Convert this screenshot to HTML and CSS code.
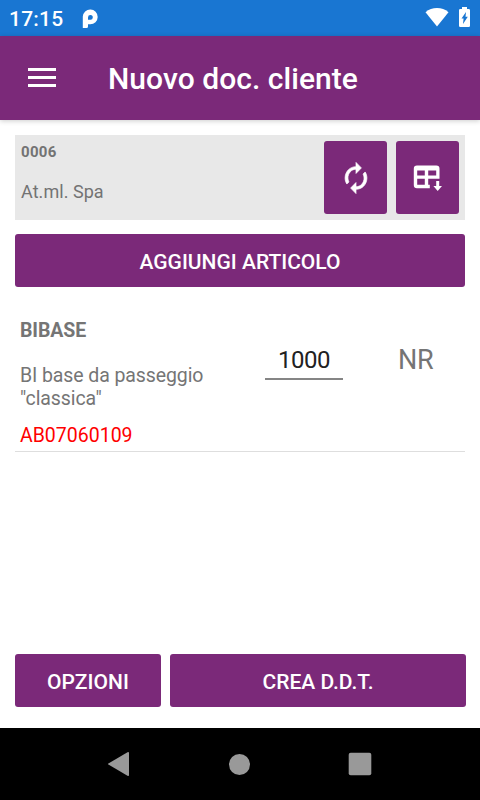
FILE: index.html
```html
<!DOCTYPE html>
<html lang="it">
<head>
<meta charset="utf-8">
<title>Nuovo doc. cliente</title>
<link rel="stylesheet" href="styles.css">
</head>
<body>
<div class="screen">
  <div class="status">
    <span class="clock">17:15</span>
    <svg class="p-logo" width="16" height="20" viewBox="0 0 16 20"><path fill="#fff" fill-rule="evenodd" d="M.800 19V7.500a7.450 7.450 0 1 1 7.500 7.800H6V17.500Q6 19 4.500 19ZM6 10.800H8.200a2.400 2.400 0 1 0-2.200-2.400Z"/></svg>
    <svg class="wifi" width="24" height="19" viewBox="0 0 24 19"><path fill="#fff" d="M12 18.500.500 4.200Q5.500 0 12 0T23.500 4.200Z"/></svg>
    <svg class="battery" width="11" height="20" viewBox="0 0 11 20"><path fill="#fff" fill-rule="evenodd" d="M3 0H8V2H9.700Q11 2 11 3.300V18.700Q11 20 9.700 20H1.300Q0 20 0 18.700V3.300Q0 2 1.300 2H3ZM7 5 2.500 11.500H4.600L4 17 8.800 9.700H6.500Z"/></svg>
  </div>
  <header class="appbar">
    <div class="menu"><i></i><i></i><i></i></div>
    <h1>Nuovo doc. cliente</h1>
  </header>
  <main class="content">
    <section class="customer">
      <div class="customer-info">
        <div class="code">0006</div>
        <div class="name">At.ml. Spa</div>
      </div>
      <button class="btn icon-btn" aria-label="Aggiorna">
        <svg width="34" height="34" viewBox="0 0 24 24"><path fill="#fff" stroke="#fff" stroke-width=".5" d="M12 5.800v3l3.800-3.900L12 1v3c-4.420 0-7.700 3.580-7.700 8 0 1.570.460 3.030 1.240 4.260L7 14.800c-.450-.830-.700-1.790-.700-2.800 0-3.310 2.390-6.200 5.700-6.200zm6.460 1.940L17 9.200c.440.840.700 1.790.700 2.800 0 3.310-2.390 6.200-5.700 6.200v-3l-3.800 3.900L12 23v-3c4.420 0 7.700-3.580 7.700-8 0-1.570-.460-3.030-1.240-4.260z"/></svg>
      </button>
      <button class="btn icon-btn" aria-label="Inserisci">
        <svg width="30" height="28" viewBox="0 0 30 28"><path fill="#fff" fill-rule="evenodd" d="M4 1.500H23.300Q26.500 1.500 26.500 4.700V14.800H15.200V20.800H16.800V24.200H4Q.800 24.200.800 21V4.700Q.800 1.500 4 1.500ZM4.200 6.500V11.500H11.800V6.500ZM15.200 6.500V11.500H23.200V6.500ZM4.200 14.800V20.800H11.800V14.800ZM23.200 17H26.200V22H29L24.700 27 20.400 22H23.200Z"/></svg>
      </button>
    </section>
    <button class="btn add">AGGIUNGI ARTICOLO</button>
    <section class="item">
      <div class="item-info">
        <div class="item-code">BIBASE</div>
        <div class="item-desc">BI base da passeggio<br>"classica"</div>
        <div class="item-lot">AB07060109</div>
      </div>
      <div class="qty">1000</div>
      <div class="unit">NR</div>
    </section>
    <div class="actions">
      <button class="btn options">OPZIONI</button>
      <button class="btn create">CREA D.D.T.</button>
    </div>
  </main>
  <nav class="navbar">
    <svg width="24" height="26" viewBox="0 0 24 26"><path fill="#999" d="M1.400 12.400 20.500 1.200Q22 .500 22 2V24Q22 25.500 20.500 24.800L1.400 13.600Q.500 13 1.400 12.400Z"/></svg>
    <svg width="22" height="22" viewBox="0 0 22 22"><circle cx="10.500" cy="11.500" r="10.500" fill="#999"/></svg>
    <svg width="24" height="24" viewBox="0 0 24 24"><rect x=".700" y=".700" width="22.600" height="22.600" rx="2" fill="#999"/></svg>
  </nav>
</div>
</body>
</html>
```
FILE: styles.css
```css
* { box-sizing: border-box; }
body { margin: 0; font-family: Roboto, sans-serif; background: #fff; }
.screen { width: 480px; height: 800px; display: flex; flex-direction: column; overflow: hidden; }
.status { height: 36px; flex: none; background: #1976d2; display: flex; align-items: flex-start; padding: 0 10px 0 9px; }
.clock { color: #fff; font-size: 21px; font-weight: 500; line-height: 38px; width: 73px; letter-spacing: .2px; white-space: nowrap; }
.p-logo { margin-top: 9px; }
.wifi { margin: 8px 10px 0 auto; }
.battery { margin-top: 7px; }
.appbar { height: 84px; flex: none; background: #7b2979; display: flex; align-items: center; padding: 0 28px; box-shadow: 0 1px 5px rgba(0, 0, 0, .2); }
.menu { width: 28px; height: 19px; display: flex; flex-direction: column; justify-content: space-between; margin: -1px 52px 0 0; }
.menu i { height: 3px; background: #fff; }
h1 { margin: 2px 0 0; color: #fff; font-size: 30px; font-weight: 500; line-height: 36px; letter-spacing: .05px; white-space: nowrap; }
.content { flex: 1; min-height: 0; display: flex; flex-direction: column; padding: 15px 14px 21px 15px; }
.customer { width: 450px; height: 85px; flex: none; background: #e8e8e8; display: flex; gap: 9px; padding: 6px; color: #737373; }
.customer-info { flex: 1; }
.code { font-size: 15px; font-weight: 700; line-height: 18px; margin-top: 2px; letter-spacing: .3px; }
.name { font-size: 18px; line-height: 22px; margin-top: 20px; letter-spacing: .05px; }
.btn { border: 0; border-radius: 3px; background: #7b2979; color: #fff; font: 500 21px/25px Roboto, sans-serif; height: 53px; padding: 4px 0 0; white-space: nowrap; }
.icon-btn { width: 63px; height: 73px; display: flex; align-items: center; justify-content: center; padding: 0; }
.add { width: 450px; margin-top: 14px; flex: none; }
.item { width: 450px; height: 165px; flex: none; display: flex; border-bottom: 1px solid #dedede; color: #757575; }
.item-info { width: 250px; padding: 32px 0 0 5px; font-size: 19.5px; line-height: 23px; }
.item-code { font-weight: 700; letter-spacing: -.1px; }
.item-desc { margin-top: 22px; letter-spacing: -.1px; }
.item-lot { margin-top: 14px; color: #f00; }
.qty { width: 78px; height: 93px; padding-top: 58px; border-bottom: 2px solid #858585; color: #212121; font-size: 24px; line-height: 30px; text-align: center; letter-spacing: -.5px; }
.unit { margin-left: 55px; padding-top: 57px; font-size: 27px; line-height: 33px; letter-spacing: -.2px; }
.actions { display: flex; gap: 9px; margin-top: auto; }
.options { width: 146px; letter-spacing: .1px; }
.create { width: 296px; }
.navbar { height: 72px; flex: none; background: #000; display: flex; align-items: center; justify-content: space-between; padding: 0 108px 0 107px; }
```
